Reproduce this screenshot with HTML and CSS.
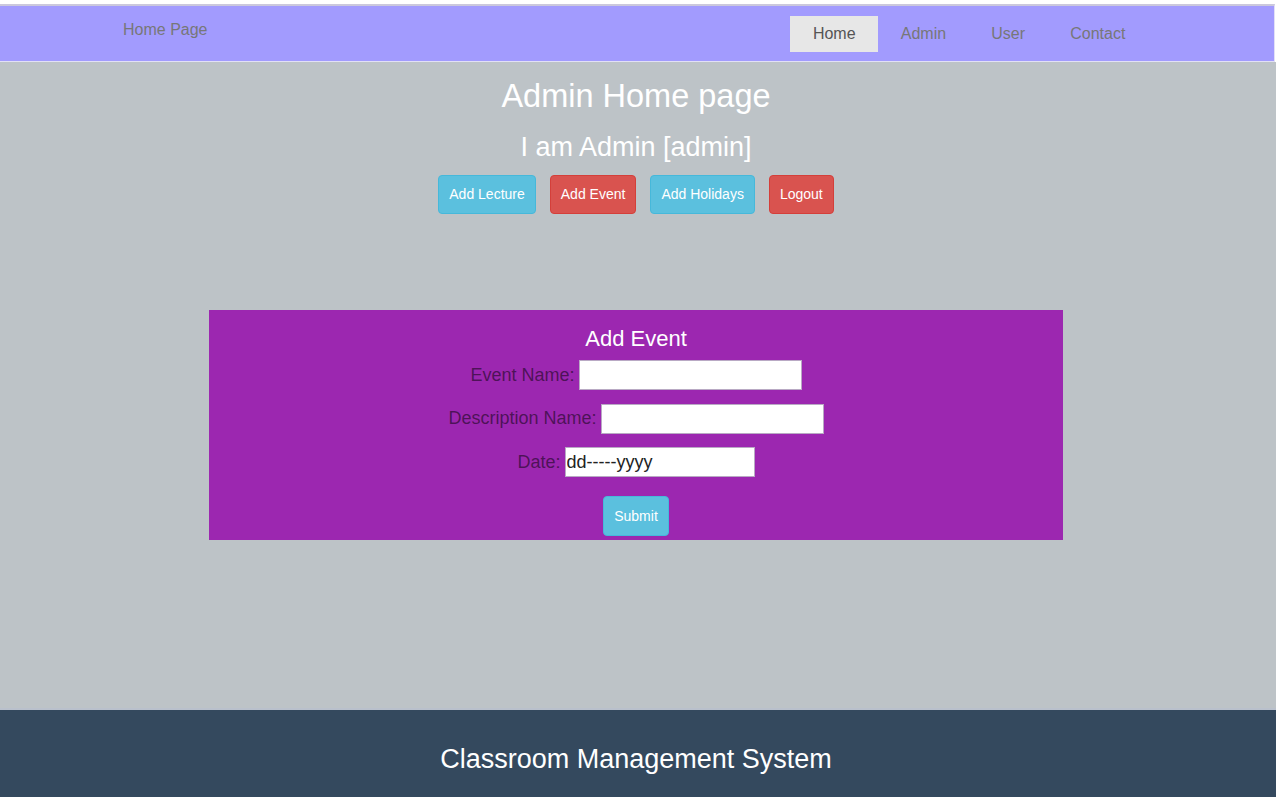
FILE: index.html
```html
<!DOCTYPE html>
<html lang="en">
<head>
<meta charset="utf-8">
<title>Admin Home page</title>
<link rel="stylesheet" href="styles.css">
</head>
<body>
<header class="header">
  <nav class="navbar">
    <a class="brand" href="#">Home Page</a>
    <ul class="nav">
      <li><a class="active" href="#">Home</a></li>
      <li><a href="#">Admin</a></li>
      <li><a href="#">User</a></li>
      <li><a href="#">Contact</a></li>
    </ul>
  </nav>
</header>
<main class="main">
  <h1 class="title">Admin Home page</h1>
  <h2 class="subtitle">I am Admin [admin]</h2>
  <div class="actions">
    <a class="btn btn-info" href="#">Add Lecture</a>
    <a class="btn btn-danger" href="#">Add Event</a>
    <a class="btn btn-info" href="#">Add Holidays</a>
    <a class="btn btn-danger" href="#">Logout</a>
  </div>
  <form class="event-form">
    <h3 class="form-title">Add Event</h3>
    <div class="rows">
      <div class="row"><label class="label">Event Name:</label><input class="input input-wide" type="text"></div>
      <div class="row"><label class="label">Description Name:</label><input class="input input-wide" type="text"></div>
      <div class="row"><label class="label">Date:</label><input class="input input-date" type="text" value="dd-----yyyy"></div>
    </div>
    <button class="btn btn-info btn-submit" type="button">Submit</button>
  </form>
</main>
<footer class="footer">
  <p class="footer-text">Classroom Management System</p>
</footer>
</body>
</html>
```

FILE: styles.css
```css
* { box-sizing: border-box; }
html, body { margin: 0; padding: 0; }
body {
  font-family: "Liberation Sans", Arial, sans-serif;
  background: #bdc3c7;
  display: flex;
  flex-direction: column;
  min-height: 100vh;
}
a { text-decoration: none; }

.header {
  background: #fff;
  padding-top: 4px;
}
.navbar {
  background: #a29bfe;
  border-top: 2px solid #cbc8dc;
  border-bottom: 1px solid #e2e0f6;
  border-right: 1px solid #e2e0f6;
  margin-right: 1px;
  height: 58px;
  display: flex;
  justify-content: space-between;
  align-items: flex-start;
  padding: 0 126px 0 123px;
}
.brand {
  color: #777;
  font-size: 16px;
  line-height: 20px;
  padding-top: 14px;
}
.nav {
  list-style: none;
  margin: 10px 0 0;
  padding: 0;
  display: flex;
}
.nav a {
  display: block;
  color: #777;
  font-size: 16px;
  line-height: 36px;
  padding: 0 22.6px;
}
.nav a.active {
  background: #e7e7e7;
  color: #555;
}

.main {
  flex: 1;
  padding: 16px 4px 0 0;
  display: flex;
  flex-direction: column;
  align-items: center;
}
.title {
  margin: 0;
  color: #fff;
  font-size: 32.5px;
  line-height: 36px;
  font-weight: normal;
}
.subtitle {
  margin: 18px 0 0;
  color: #fff;
  font-size: 27px;
  line-height: 31px;
  font-weight: normal;
}
.actions {
  margin-top: 12px;
  display: flex;
  gap: 14px;
}
.btn {
  display: inline-block;
  font-family: inherit;
  font-size: 14px;
  line-height: 19px;
  padding: 9px 10px;
  border: 1px solid transparent;
  border-radius: 4px;
  color: #fff;
  cursor: pointer;
}
.btn-info { background: #5bc0de; border-color: #46b8da; }
.btn-danger { background: #d9534f; border-color: #d43f3a; }

.event-form {
  margin-top: 96px;
  width: 854px;
  height: 230px;
  background: #9c27b0;
  padding-top: 16px;
  display: flex;
  flex-direction: column;
  align-items: center;
}
.form-title {
  margin: 0;
  color: #fff;
  font-size: 22px;
  line-height: 26px;
  font-weight: normal;
}
.rows {
  margin-top: 8px;
  display: flex;
  flex-direction: column;
  align-items: center;
  gap: 13.5px;
}
.row {
  display: flex;
  align-items: center;
  gap: 4px;
  height: 30px;
}
.label {
  color: rgba(0, 0, 0, 0.52);
  font-size: 18px;
}
.input {
  height: 30px;
  border: 1px solid #b9a9c4;
  background: #fff;
  font-family: inherit;
  font-size: 18px;
  color: #222;
  padding: 0 1px;
  margin: 0;
}
.input-wide { width: 223px; }
.input-date { width: 190px; }
.btn-submit {
  margin-top: 19px;
  line-height: 20px;
}

.footer {
  height: 87px;
  background: #34495e;
  box-shadow: 0 -2px 0 #b9c0cc;
  padding: 34px 4px 0 0;
}
.footer-text {
  margin: 0;
  text-align: center;
  color: #fff;
  font-size: 27px;
  line-height: 31px;
}
```
